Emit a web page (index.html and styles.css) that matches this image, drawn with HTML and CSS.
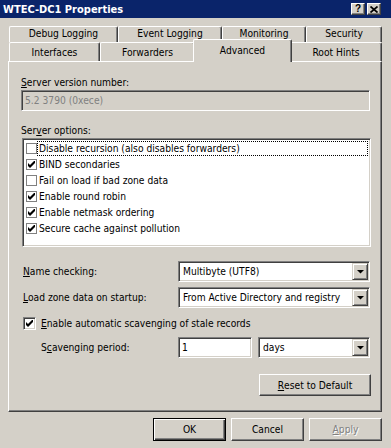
FILE: index.html
```html
<!DOCTYPE html>
<html>
<head>
<meta charset="utf-8">
<link rel="stylesheet" href="styles.css">
</head>
<body>
<div class="titlebar">
  <span class="title">WTEC-DC1 Properties</span>
  <div class="tb-buttons">
    <span class="tb-btn help">?</span>
    <span class="tb-btn close"><svg width="8" height="7" viewBox="0 0 8 7"><path d="M0.5 0.5 L7.5 6.5 M7.5 0.5 L0.5 6.5" stroke="#000" stroke-width="1.7" fill="none"/></svg></span>
  </div>
</div>

<div class="tabs">
  <div class="tab-row back">
    <div class="tab w-debug">Debug Logging</div>
    <div class="tab w-event">Event Logging</div>
    <div class="tab w-mon">Monitoring</div>
    <div class="tab w-sec">Security</div>
  </div>
  <div class="tab-row front">
    <div class="tab w-int">Interfaces</div>
    <div class="tab w-fwd">Forwarders</div>
    <div class="tab w-adv selected">Advanced</div>
    <div class="tab w-root">Root Hints</div>
  </div>
</div>

<div class="panel">
  <div class="label"><u>S</u>erver version number:</div>
  <div class="textbox version sunken">5.2 3790 (0xece)</div>
  <div class="label options">Ser<u>v</u>er options:</div>
  <div class="listbox sunken">
    <div class="item"><span class="lcheck"></span><span class="ltext focus">Disable recursion (also disables forwarders)</span></div>
    <div class="item"><span class="lcheck"><svg class="tick" width="7" height="7" viewBox="0 0 7 7"><polygon points="0,2 2,4 7,-1 7,2 2,7 0,5"/></svg></span><span class="ltext">BIND secondaries</span></div>
    <div class="item"><span class="lcheck"></span><span class="ltext">Fail on load if bad zone data</span></div>
    <div class="item"><span class="lcheck"><svg class="tick" width="7" height="7" viewBox="0 0 7 7"><polygon points="0,2 2,4 7,-1 7,2 2,7 0,5"/></svg></span><span class="ltext">Enable round robin</span></div>
    <div class="item"><span class="lcheck"><svg class="tick" width="7" height="7" viewBox="0 0 7 7"><polygon points="0,2 2,4 7,-1 7,2 2,7 0,5"/></svg></span><span class="ltext">Enable netmask ordering</span></div>
    <div class="item"><span class="lcheck"><svg class="tick" width="7" height="7" viewBox="0 0 7 7"><polygon points="0,2 2,4 7,-1 7,2 2,7 0,5"/></svg></span><span class="ltext">Secure cache against pollution</span></div>
  </div>

  <div class="row name">
    <span class="row-label"><u>N</u>ame checking:</span>
    <div class="combo sunken"><span class="combo-text">Multibyte (UTF8)</span><span class="drop"><svg width="7" height="4" viewBox="0 0 7 4"><polygon points="0,0 7,0 3.5,3.6"/></svg></span></div>
  </div>
  <div class="row load">
    <span class="row-label"><u>L</u>oad zone data on startup:</span>
    <div class="combo sunken"><span class="combo-text">From Active Directory and registry</span><span class="drop"><svg width="7" height="4" viewBox="0 0 7 4"><polygon points="0,0 7,0 3.5,3.6"/></svg></span></div>
  </div>

  <div class="check-row">
    <span class="cbox sunken"><svg width="7" height="7" viewBox="0 0 7 7"><polygon points="0,2 2,4 7,-1 7,2 2,7 0,5"/></svg></span>
    <span><u>E</u>nable automatic scavenging of stale records</span>
  </div>

  <div class="scav">
    <span class="scav-label">S<u>c</u>avenging period:</span>
    <div class="textbox period sunken">1</div>
    <div class="combo days sunken"><span class="combo-text">days</span><span class="drop"><svg width="7" height="4" viewBox="0 0 7 4"><polygon points="0,0 7,0 3.5,3.6"/></svg></span></div>
  </div>

  <div class="reset-row">
    <button class="btn reset"><u>R</u>eset to Default</button>
  </div>
</div>

<div class="actions">
  <button class="btn default">OK</button>
  <button class="btn">Cancel</button>
  <button class="btn disabled"><u>A</u>pply</button>
</div>
</body>
</html>
```

FILE: styles.css
```css
* { box-sizing: border-box; }
html, body { margin: 0; padding: 0; }
body {
  width: 391px;
  height: 448px;
  overflow: hidden;
  background: #d4d0c8;
  font-family: "DejaVu Sans Condensed", "DejaVu Sans", sans-serif;
  font-stretch: condensed;
  font-size: 10.2px;
  line-height: 13px;
  color: #000;
}
u { text-decoration: underline; text-underline-offset: 1px; }

/* title bar */
.titlebar {
  height: 18px;
  background: #0a246a;
  display: flex;
  align-items: center;
  justify-content: space-between;
  padding: 0 10px 0 3px;
}
.title { color: #fff; font-weight: bold; font-size: 11px; }
.tb-buttons { display: flex; gap: 2px; }
.tb-btn {
  width: 14px;
  height: 12px;
  background: #d4d0c8;
  border: 1px solid;
  border-color: #fff #404040 #404040 #fff;
  box-shadow: inset -1px -1px #808080;
  display: flex;
  align-items: center;
  justify-content: center;
  font-family: "Liberation Sans", Arial, sans-serif;
  font-weight: bold;
  font-size: 10px;
  line-height: 10px;
}

/* tabs */
.tabs { margin-top: 8px; padding-left: 9px; width: 382px; }
.tab-row { display: flex; }
.tab-row.back { height: 16px; }
.tab-row.front { height: 19px; }
.tab {
  flex: none;
  background: #d4d0c8;
  border-top: 1px solid #fff;
  border-left: 1px solid #fff;
  border-right: 1px solid #404040;
  box-shadow: inset -1px 0 #808080;
  border-radius: 2px 2px 0 0;
  text-align: center;
  white-space: nowrap;
}
.back .tab { height: 16px; padding-top: 0; overflow: hidden; }
.front .tab { height: 19px; padding-top: 3px; }
.tab.selected {
  position: relative;
  z-index: 2;
  height: 23px;
  margin: -3px -2px 0;
  padding-top: 4px;
}
.w-debug { width: 109px; }
.w-event { width: 104px; }
.w-mon { width: 84px; }
.w-sec { width: 76px; }
.w-int { width: 91px; }
.w-fwd { width: 95px; }
.w-adv { width: 99px; }
.w-root { width: 92px; }

/* panel */
.panel {
  margin-left: 8px;
  width: 374px;
  height: 351px;
  border: 1px solid;
  border-color: #fff #404040 #404040 #fff;
  box-shadow: inset -1px -1px #808080;
  padding: 14px 10px 0 12px;
  display: flex;
  flex-direction: column;
}
.label { height: 13px; }
.label.options { margin-top: 13px; }

.sunken {
  border: 1px solid;
  border-color: #808080 #fff #fff #808080;
  box-shadow: inset 1px 1px #404040, inset -1px -1px #d4d0c8;
}
.textbox {
  height: 21px;
  display: flex;
  align-items: center;
  padding-left: 3px;
  background: #fff;
}
.textbox.version {
  margin-top: 1px;
  margin-right: 1px;
  background: #d4d0c8;
  color: #808080;
}

.listbox {
  margin-top: 1px;
  margin-left: 1px;
  height: 109px;
  background: #fff;
  padding: 1px 1px 1px 3px;
}
.item { height: 16px; display: flex; align-items: center; }
.lcheck {
  flex: none;
  width: 11px;
  height: 11px;
  border: 1px solid #808080;
  background: #fff;
  display: flex;
  align-items: center;
  justify-content: center;
}
.ltext {
  flex: 1;
  height: 15px;
  line-height: 13px;
  padding-left: 1px;
  margin-right: 1px;
  border: 1px dotted transparent;
  white-space: nowrap;
}
.ltext.focus { border-color: #000; }
svg polygon { fill: #000; }

.row {
  display: grid;
  grid-template-columns: 157px 1fr;
  align-items: center;
  height: 21px;
}
.row.name { margin-top: 14px; }
.row.load { margin-top: 5px; }
.row-label { padding-left: 2px; }

.combo {
  height: 21px;
  margin-right: 1px;
  background: #fff;
  display: flex;
  align-items: center;
  padding: 1px;
}
.combo-text { flex: 1; padding-left: 3px; white-space: nowrap; overflow: hidden; }
.drop {
  flex: none;
  width: 16px;
  height: 17px;
  background: #d4d0c8;
  border: 1px solid;
  border-color: #d4d0c8 #404040 #404040 #d4d0c8;
  box-shadow: inset 1px 1px #fff, inset -1px -1px #808080;
  display: flex;
  align-items: center;
  justify-content: center;
}

.check-row {
  margin-top: 9px;
  height: 13px;
  display: flex;
  align-items: center;
  gap: 5px;
  padding-left: 2px;
}
.cbox {
  flex: none;
  width: 13px;
  height: 13px;
  background: #fff;
  display: flex;
  align-items: center;
  justify-content: center;
}

.scav {
  margin-top: 7px;
  display: grid;
  grid-template-columns: 157px 74px 1fr;
  align-items: center;
  height: 21px;
}
.scav-label { padding-left: 20px; }
.combo.days { margin-left: 6px; }

.reset-row { margin-top: 16px; display: flex; justify-content: flex-end; }

.btn {
  appearance: none;
  margin: 0;
  padding: 0;
  font: inherit;
  color: #000;
  height: 23px;
  width: 73px;
  background: #d4d0c8;
  border: 1px solid;
  border-color: #fff #404040 #404040 #fff;
  box-shadow: inset -1px -1px #808080;
  display: flex;
  align-items: center;
  justify-content: center;
}
.btn.reset { width: 112px; height: 22px; }
.btn.default {
  border-color: #000;
  box-shadow: inset 1px 1px #fff, inset -1px -1px #404040, inset -2px -2px #808080;
}
.btn.disabled { color: #808080; text-shadow: 1px 1px #fff; }

.actions {
  margin-top: 6px;
  display: flex;
  justify-content: flex-end;
  gap: 5px;
  padding-right: 9px;
}
```
